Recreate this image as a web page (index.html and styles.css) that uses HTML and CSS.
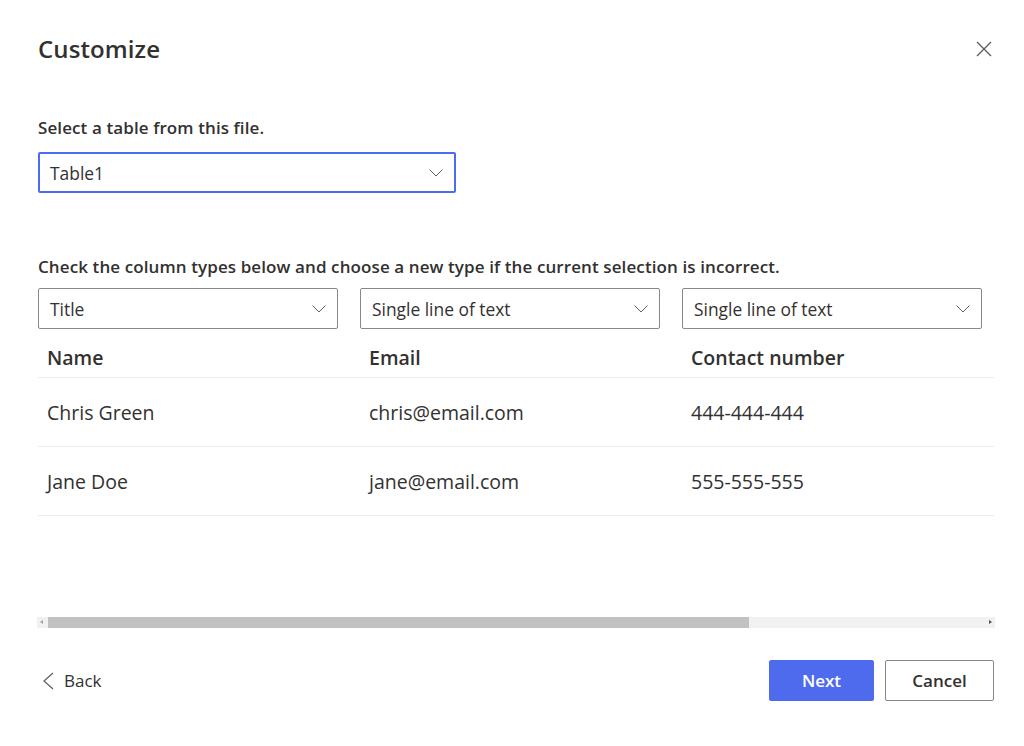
FILE: index.html
```html
<!DOCTYPE html>
<html lang="en">
<head>
<meta charset="utf-8">
<title>Customize</title>
<link rel="stylesheet" href="styles.css">
</head>
<body>
<div class="dialog">
  <header class="head">
    <h1 class="title">Customize</h1>
    <button class="close" aria-label="Close">
      <svg width="16" height="16" viewBox="0 0 16 16"><path d="M1 1L15 15M15 1L1 15" stroke="#605e5c" stroke-width="1.4" fill="none"/></svg>
    </button>
  </header>

  <section class="field">
    <div class="label">Select a table from this file.</div>
    <div class="select focused">
      <span>Table1</span>
      <svg class="chev" width="14" height="8" viewBox="0 0 14 8"><path d="M0.5 0.5L7 7L13.5 0.5" stroke="#605e5c" stroke-width="1" fill="none"/></svg>
    </div>
  </section>

  <section class="columns">
    <div class="label">Check the column types below and choose a new type if the current selection is incorrect.</div>
    <div class="viewport">
      <div class="grid">
        <div class="types">
          <div class="cell"><div class="select"><span>Title</span><svg class="chev" width="14" height="8" viewBox="0 0 14 8"><path d="M0.5 0.5L7 7L13.5 0.5" stroke="#605e5c" stroke-width="1" fill="none"/></svg></div></div>
          <div class="cell"><div class="select"><span>Single line of text</span><svg class="chev" width="14" height="8" viewBox="0 0 14 8"><path d="M0.5 0.5L7 7L13.5 0.5" stroke="#605e5c" stroke-width="1" fill="none"/></svg></div></div>
          <div class="cell"><div class="select"><span>Single line of text</span><svg class="chev" width="14" height="8" viewBox="0 0 14 8"><path d="M0.5 0.5L7 7L13.5 0.5" stroke="#605e5c" stroke-width="1" fill="none"/></svg></div></div>
        </div>
        <div class="row header">
          <div class="td">Name</div><div class="td">Email</div><div class="td">Contact number</div>
        </div>
        <div class="row">
          <div class="td">Chris Green</div><div class="td">chris@email.com</div><div class="td">444-444-444</div>
        </div>
        <div class="row">
          <div class="td">Jane Doe</div><div class="td">jane@email.com</div><div class="td">555-555-555</div>
        </div>
      </div>
    </div>
    <div class="scrollbar">
      <span class="arrow left"></span>
      <div class="track"><div class="thumb"></div></div>
      <span class="arrow right"></span>
    </div>
  </section>

  <footer class="foot">
    <button class="back">
      <svg width="12" height="18" viewBox="0 0 12 18"><path d="M11 1L2 9L11 17" stroke="#605e5c" stroke-width="1.2" fill="none"/></svg>
      <span>Back</span>
    </button>
    <div class="actions">
      <button class="btn primary">Next</button>
      <button class="btn">Cancel</button>
    </div>
  </footer>
</div>
</body>
</html>
```

FILE: styles.css
```css
* { box-sizing: border-box; }
html, body { margin: 0; padding: 0; background: #fff; }
body {
  font-family: "Open Sans", "Noto Sans", "Liberation Sans", sans-serif;
  color: #323130;
  width: 1024px;
  height: 746px;
  overflow: hidden;
}
.dialog {
  padding: 33px 30px 0 38px;
  display: flex;
  flex-direction: column;
}
.head {
  display: flex;
  justify-content: space-between;
  align-items: center;
  height: 32px;
}
.title {
  margin: 0;
  font-size: 24px;
  font-weight: 600;
  line-height: 32px;
  letter-spacing: 0.1px;
  color: #323130;
}
.close {
  border: 0;
  background: none;
  padding: 0;
  width: 16px;
  height: 16px;
  margin-right: 2px;
  display: flex;
}
.label {
  font-size: 17px;
  font-weight: 600;
  line-height: 22px;
  letter-spacing: 0.1px;
}
.field {
  margin-top: 52px;
  display: flex;
  flex-direction: column;
  gap: 13px;
}
.select {
  display: flex;
  align-items: center;
  justify-content: space-between;
  height: 41px;
  border: 1px solid #8a8886;
  border-radius: 2px;
  padding: 0 11px 0 11px;
  font-size: 17.4px;
  line-height: 22px;
}
.select.focused {
  width: 418px;
  border: 2px solid #4f6bed;
  padding: 0 11px 0 10px;
}
.chev { flex: none; }
.columns {
  margin-top: 63px;
  display: flex;
  flex-direction: column;
}
.columns > .label { margin-bottom: 10px; }
.viewport {
  width: 956px;
  height: 329px;
  overflow: hidden;
}
.grid { width: 1288px; }
.types { display: flex; }
.types .cell { width: 322px; flex: none; padding-right: 22px; }
.row {
  display: flex;
  border-bottom: 1px solid #edebe9;
  height: 69px;
  align-items: center;
  padding-top: 2px;
}
.row.header {
  height: 49px;
  align-items: flex-end;
  padding-top: 0;
  padding-bottom: 6px;
  font-weight: 600;
}
.td {
  width: 322px;
  flex: none;
  padding-left: 9px;
  font-size: 19.5px;
  line-height: 26px;
}
.scrollbar {
  display: flex;
  align-items: center;
  height: 11px;
  width: 958px;
  margin-left: -1px;
  background: #f1f1f1;
}
.arrow { width: 10px; height: 11px; flex: none; position: relative; }
.arrow.left::before {
  content: ""; position: absolute; left: 3px; top: 3px;
  border-right: 3px solid #a3a3a3; border-top: 2.5px solid transparent; border-bottom: 2.5px solid transparent;
}
.arrow.right::before {
  content: ""; position: absolute; right: 3px; top: 3px;
  border-left: 3px solid #505050; border-top: 2.5px solid transparent; border-bottom: 2.5px solid transparent;
}
.track { flex: 1; height: 11px; }
.thumb { width: 701px; height: 11px; margin-left: 1px; background: #c1c1c1; }
.foot {
  margin-top: 32px;
  display: flex;
  justify-content: space-between;
  align-items: center;
}
.back {
  display: flex;
  align-items: center;
  gap: 10px;
  border: 0;
  background: none;
  padding: 0 0 0 4px;
  font-family: inherit;
  font-size: 17px;
  color: #323130;
}
.actions { display: flex; gap: 11px; }
.btn {
  height: 41px;
  min-width: 105px;
  padding: 0 20px;
  border: 1px solid #8a8886;
  border-radius: 2px;
  background: #fff;
  font-family: inherit;
  font-size: 17px;
  font-weight: 600;
  color: #323130;
}
.btn.primary {
  background: #4f6bed;
  border-color: #4f6bed;
  color: #fff;
}
.actions .btn:last-child { width: 109px; }
```
